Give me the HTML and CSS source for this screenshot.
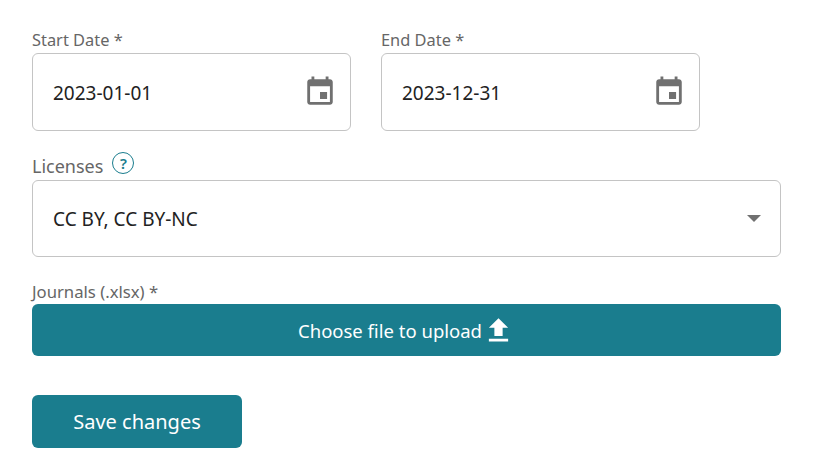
FILE: index.html
```html
<!DOCTYPE html>
<html lang="en">
  <head>
    <meta charset="UTF-8" />
    <title>Journals form</title>
    <link rel="stylesheet" href="styles.css">
  </head>
  <body>
    <form class="form">
      <div class="date-row">
        <div class="field">
          <label class="field-label">Start Date *</label>
          <div class="input-box">
            <span class="input-value">2023-01-01</span>
            <svg class="calendar-icon" viewBox="0 0 24 24"><path d="M17 12h-5v5h5v-5zM16 1v2H8V1H6v2H5c-1.11 0-1.99.9-1.99 2L3 19c0 1.1.89 2 2 2h14c1.1 0 2-.9 2-2V5c0-1.1-.9-2-2-2h-1V1h-2zm3 18H5V8h14v11z"/></svg>
          </div>
        </div>
        <div class="field">
          <label class="field-label">End Date *</label>
          <div class="input-box">
            <span class="input-value">2023-12-31</span>
            <svg class="calendar-icon" viewBox="0 0 24 24"><path d="M17 12h-5v5h5v-5zM16 1v2H8V1H6v2H5c-1.11 0-1.99.9-1.99 2L3 19c0 1.1.89 2 2 2h14c1.1 0 2-.9 2-2V5c0-1.1-.9-2-2-2h-1V1h-2zm3 18H5V8h14v11z"/></svg>
          </div>
        </div>
      </div>

      <div class="licenses">
        <div class="licenses-label">
          <label class="field-label">Licenses</label>
          <span class="help-icon">?</span>
        </div>
        <div class="input-box select-box">
          <span class="input-value">CC BY, CC BY-NC</span>
          <span class="select-arrow"></span>
        </div>
      </div>

      <div class="journals">
        <label class="field-label">Journals (.xlsx) *</label>
        <button type="button" class="upload-btn">
          Choose file to upload
          <svg class="upload-icon" viewBox="0 0 24 24"><path d="M9 16h6v-6h4l-7-7-7 7h4v6zm-4 2h14v2H5v-2z"/></svg>
        </button>
      </div>

      <button type="button" class="save-btn">Save changes</button>
    </form>
  </body>
</html>
```

FILE: styles.css
```css
* {
  margin: 0;
  padding: 0;
  box-sizing: border-box;
}

body {
  font-family: "Noto Sans", "Open Sans", sans-serif;
  background: #fff;
}

.form {
  width: 749px;
  margin-left: 32px;
  padding-top: 28px;
}

.date-row {
  display: flex;
  gap: 30px;
}

.field {
  width: 319px;
}

.field-label {
  display: block;
  height: 25px;
  font-size: 16.4px;
  line-height: 23px;
  color: #666;
}

.input-box {
  display: flex;
  align-items: center;
  justify-content: space-between;
  height: 78px;
  padding: 0 13px 0 20px;
  border: 1px solid #c4c4c4;
  border-radius: 6px;
}

.input-value {
  font-size: 19px;
  color: #222;
}

.date-row .input-value {
  margin-top: 2px;
}

.calendar-icon {
  width: 34px;
  height: 34px;
  fill: #707070;
}

.licenses {
  margin-top: 21px;
}

.licenses-label {
  display: flex;
  align-items: flex-start;
  gap: 9px;
  height: 28px;
}

.licenses-label .field-label {
  margin-top: 3px;
  font-size: 18px;
}

.help-icon {
  width: 22px;
  height: 22px;
  border: 1px solid #1a7d8e;
  border-radius: 50%;
  font-size: 15px;
  font-weight: 600;
  line-height: 20px;
  text-align: center;
  color: #1a7d8e;
}

.select-box {
  height: 77px;
  padding-right: 19px;
}

.select-arrow {
  border-top: 7px solid #707070;
  border-left: 7px solid transparent;
  border-right: 7px solid transparent;
}

.journals {
  margin-top: 23px;
}

.journals .field-label {
  height: 24px;
  font-size: 16.7px;
}

.upload-btn,
.save-btn {
  border: none;
  border-radius: 6px;
  background: #1a7d8e;
  color: #fff;
  font-family: inherit;
  cursor: pointer;
}

.upload-btn {
  display: flex;
  align-items: center;
  justify-content: center;
  width: 100%;
  height: 52px;
  font-size: 18.5px;
}

.upload-icon {
  width: 33px;
  height: 33px;
  fill: #fff;
}

.save-btn {
  display: block;
  width: 210px;
  height: 53px;
  margin-top: 39px;
  font-size: 20px;
}
```
